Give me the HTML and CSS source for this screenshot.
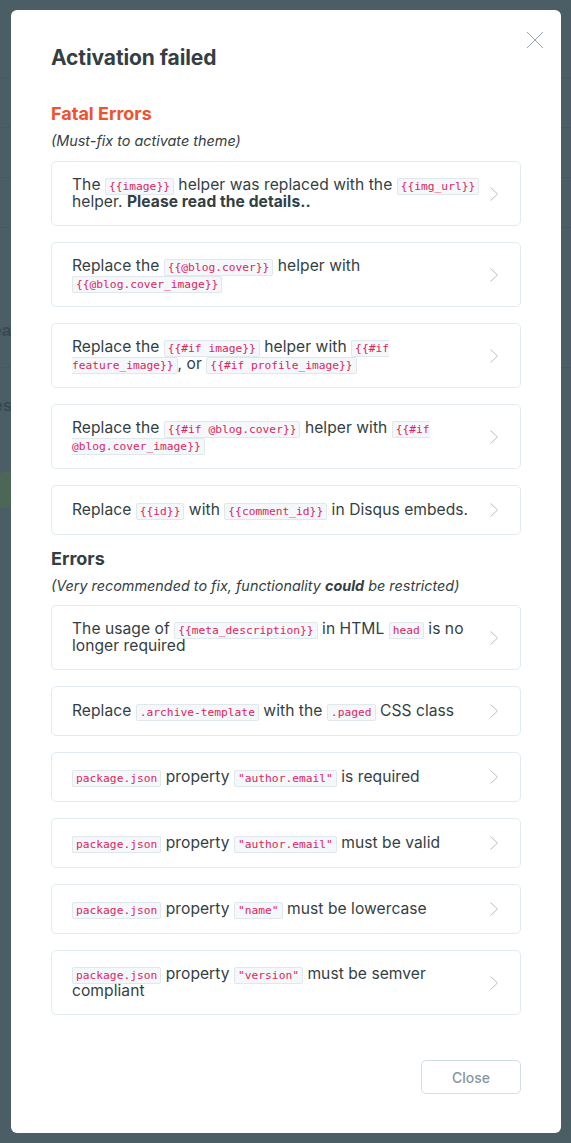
FILE: index.html
```html
<!DOCTYPE html>
<html lang="en">
<head>
<meta charset="utf-8">
<title>Activation failed</title>
<link rel="stylesheet" href="styles.css">
</head>
<body>
<div class="page">
  <div class="page-line l1"></div>
  <div class="page-line l2"></div>
  <div class="page-line l3"></div>
  <div class="page-line l4"></div>
  <div class="page-word w1">Beautiful</div>
  <div class="page-line l5"></div>
  <div class="page-word w2">Design</div>
  <div class="page-btn"></div>
</div>

<div class="modal">
  <button class="modal-close" aria-label="Close">
    <svg width="18" height="18" viewBox="0 0 18 18"><path d="M1 1L17 17M17 1L1 17" stroke="#9aa6ac" stroke-width="1" fill="none"/></svg>
  </button>
  <h1 class="modal-title">Activation failed</h1>

  <section class="group">
    <h2 class="group-title fatal">Fatal Errors</h2>
    <p class="group-note">(Must-fix to activate theme)</p>
    <ul class="issues">
      <li class="issue"><div class="issue-text">The <code>{{image}}</code> helper was replaced with the <code>{{img_url}}</code> helper. <strong>Please read the details..</strong></div><svg class="chev" width="8" height="14" viewBox="0 0 8 14"><path d="M0.5 0.5L7.5 7L0.5 13.5" stroke="#b3c1c8" stroke-width="1" fill="none"/></svg></li>
      <li class="issue"><div class="issue-text">Replace the <code>{{@blog.cover}}</code> helper with <code>{{@blog.cover_image}}</code></div><svg class="chev" width="8" height="14" viewBox="0 0 8 14"><path d="M0.5 0.5L7.5 7L0.5 13.5" stroke="#b3c1c8" stroke-width="1" fill="none"/></svg></li>
      <li class="issue"><div class="issue-text">Replace the <code>{{#if image}}</code> helper with <code>{{#if feature_image}}</code>, or <code>{{#if profile_image}}</code></div><svg class="chev" width="8" height="14" viewBox="0 0 8 14"><path d="M0.5 0.5L7.5 7L0.5 13.5" stroke="#b3c1c8" stroke-width="1" fill="none"/></svg></li>
      <li class="issue"><div class="issue-text">Replace the <code>{{#if @blog.cover}}</code> helper with <code>{{#if @blog.cover_image}}</code></div><svg class="chev" width="8" height="14" viewBox="0 0 8 14"><path d="M0.5 0.5L7.5 7L0.5 13.5" stroke="#b3c1c8" stroke-width="1" fill="none"/></svg></li>
      <li class="issue"><div class="issue-text">Replace <code>{{id}}</code> with <code>{{comment_id}}</code> in Disqus embeds.</div><svg class="chev" width="8" height="14" viewBox="0 0 8 14"><path d="M0.5 0.5L7.5 7L0.5 13.5" stroke="#b3c1c8" stroke-width="1" fill="none"/></svg></li>
    </ul>
  </section>

  <section class="group">
    <h2 class="group-title">Errors</h2>
    <p class="group-note">(Very recommended to fix, functionality <strong>could</strong> be restricted)</p>
    <ul class="issues">
      <li class="issue"><div class="issue-text">The usage of <code>{{meta_description}}</code> in HTML <code>head</code> is no longer required</div><svg class="chev" width="8" height="14" viewBox="0 0 8 14"><path d="M0.5 0.5L7.5 7L0.5 13.5" stroke="#b3c1c8" stroke-width="1" fill="none"/></svg></li>
      <li class="issue"><div class="issue-text">Replace <code>.archive-template</code> with the <code>.paged</code> CSS class</div><svg class="chev" width="8" height="14" viewBox="0 0 8 14"><path d="M0.5 0.5L7.5 7L0.5 13.5" stroke="#b3c1c8" stroke-width="1" fill="none"/></svg></li>
      <li class="issue"><div class="issue-text"><code>package.json</code> property <code>"author.email"</code> is required</div><svg class="chev" width="8" height="14" viewBox="0 0 8 14"><path d="M0.5 0.5L7.5 7L0.5 13.5" stroke="#b3c1c8" stroke-width="1" fill="none"/></svg></li>
      <li class="issue"><div class="issue-text"><code>package.json</code> property <code>"author.email"</code> must be valid</div><svg class="chev" width="8" height="14" viewBox="0 0 8 14"><path d="M0.5 0.5L7.5 7L0.5 13.5" stroke="#b3c1c8" stroke-width="1" fill="none"/></svg></li>
      <li class="issue"><div class="issue-text"><code>package.json</code> property <code>"name"</code> must be lowercase</div><svg class="chev" width="8" height="14" viewBox="0 0 8 14"><path d="M0.5 0.5L7.5 7L0.5 13.5" stroke="#b3c1c8" stroke-width="1" fill="none"/></svg></li>
      <li class="issue"><div class="issue-text"><code>package.json</code> property <code>"version"</code> must be semver compliant</div><svg class="chev" width="8" height="14" viewBox="0 0 8 14"><path d="M0.5 0.5L7.5 7L0.5 13.5" stroke="#b3c1c8" stroke-width="1" fill="none"/></svg></li>
    </ul>
  </section>

  <div class="modal-footer">
    <button class="btn-close">Close</button>
  </div>
</div>
</body>
</html>
```

FILE: styles.css
```css
html, body {
  margin: 0;
  padding: 0;
}
body {
  width: 571px;
  height: 1143px;
  overflow: hidden;
  position: relative;
  background: #4b5e65;
  font-family: Inter, "Noto Sans", "Liberation Sans", sans-serif;
  color: #343f44;
}

/* dimmed page behind the modal */
.page {
  display: flex;
  flex-direction: column;
}
.page-line {
  height: 1px;
  background: #475960;
}
.l1 { margin-top: 77px; }
.l2 { margin-top: 49px; }
.l3 { margin-top: 49px; }
.l4 { margin-top: 49px; }
.page-word {
  font: 700 17px/20px "Liberation Sans", sans-serif;
  color: #37494f;
  white-space: nowrap;
}
.w1 { margin-top: 93px; margin-left: -20px; }
.l5 { margin-top: 26px; }
.w2 { margin-top: 28px; margin-left: -19px; }
.page-btn {
  margin-top: 56px;
  width: 40px;
  height: 36px;
  border-radius: 4px;
  background: #4d6756;
}

/* modal */
.modal {
  position: absolute;
  left: 11px;
  top: 10px;
  width: 550px;
  box-sizing: border-box;
  padding: 35px 40px 39px 40px;
  background: #fff;
  border-radius: 6px;
}
.modal-close {
  position: absolute;
  top: 21px;
  right: 17px;
  width: 18px;
  height: 18px;
  padding: 0;
  border: 0;
  background: none;
  display: block;
}
.modal-close svg { display: block; }
.modal-title {
  margin: 0;
  font-size: 21px;
  line-height: 26px;
  font-weight: 700;
  color: #343f44;
  letter-spacing: -0.1px;
}

.group-title {
  margin: 0;
  font-size: 18px;
  line-height: 22px;
  font-weight: 700;
  color: #343f44;
}
.group-title.fatal { color: #f05230; }
.group:first-of-type .group-title { margin-top: 32px; }
.group + .group .group-title { margin-top: 13px; }
.group-note {
  margin: 6px 0 0;
  font-size: 14.4px;
  line-height: 20px;
  font-style: italic;
  color: #343f44;
}
.group-note strong { font-weight: 700; }

.issues {
  list-style: none;
  margin: 10px 0 0;
  padding: 0;
  display: flex;
  flex-direction: column;
  gap: 16px;
}
.group + .group .issues { margin-top: 9px; }
.issue {
  display: flex;
  align-items: center;
  box-sizing: border-box;
  min-height: 50px;
  border: 1px solid #e1ebf1;
  border-radius: 5px;
  padding: 15px 22px 15px 20px;
}
.issue-text {
  flex: 1;
  font-size: 15.6px;
  line-height: 16.5px;
  letter-spacing: 0.05px;
  color: #343f44;
}
.issue-text strong { font-weight: 700; }
.chev {
  flex: none;
  margin-left: 10px;
  display: block;
}
code {
  font-family: "DejaVu Sans Mono", "Liberation Mono", monospace;
  font-size: 11.25px;
  line-height: 1;
  letter-spacing: 0;
  color: #e0245e;
  background: #f5f8fa;
  border: 1px solid #e1e8ec;
  border-radius: 2px;
  padding: 1px 3px;
}

.modal-footer {
  display: flex;
  justify-content: flex-end;
  margin-top: 45px;
}
.btn-close {
  width: 100px;
  height: 34px;
  border: 1px solid #cfdfe8;
  border-radius: 5px;
  background: #fff;
  font-family: Inter, "Noto Sans", sans-serif;
  font-size: 14px;
  font-weight: 500;
  color: #8797a0;
  padding: 0;
}
```
